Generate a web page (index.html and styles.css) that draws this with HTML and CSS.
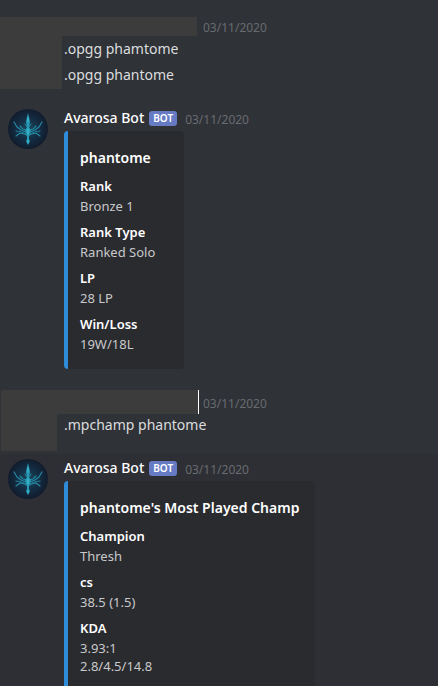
FILE: index.html
```html
<!DOCTYPE html>
<html lang="en">
<head>
<meta charset="utf-8">
<meta name="viewport" content="width=device-width, initial-scale=1">
<title>Chat</title>
<link rel="stylesheet" href="styles.css">
</head>
<body>
<svg class="defs" aria-hidden="true">
  <defs>
    <radialGradient id="glow">
      <stop offset="0" stop-color="#19485c"/>
      <stop offset="0.55" stop-color="#142d43"/>
      <stop offset="1" stop-color="#111c2d"/>
    </radialGradient>
    <symbol id="crest" viewBox="0 0 40 40">
      <circle cx="20" cy="20" r="20" fill="url(#glow)"/>
      <g fill="none" stroke="#2389a3" stroke-linecap="round" stroke-linejoin="round">
        <path d="M6 13l3 5 4 3 5 2M34 13l-3 5-4 3-5 2" stroke-width="1.2"/>
        <path d="M12 17l3 3 4 1M28 17l-3 3-4 1" stroke-width="1.1"/>
        <path d="M8 22l5 1 5 2M32 22l-5 1-5 2" stroke-width="1" stroke-dasharray="2 1"/>
        <path d="M8 27l4-3 5 1 3 2 3-2 5-1 4 3" stroke-width="1.2"/>
        <path d="M17 15l2 3M23 15l-2 3" stroke-width="1"/>
      </g>
      <path d="M20 4l1 4 1 5-1 5 2 4-2 4v4l1 2-2 4-2-4 1-2v-4l-2-4 2-4-1-5 1-5z" fill="#279bb5"/>
      <path d="M20 9v3M20 20v5M20 32v2" fill="none" stroke="#45c6d8" stroke-linecap="round"/>
    </symbol>
  </defs>
</svg>
<main class="chat">
  <article class="post">
    <header class="post-head">
      <span class="mask mask-name"></span>
      <time class="date">03/11/2020</time>
    </header>
    <div class="post-body">
      <span class="mask mask-avatar"></span>
      <div class="lines">
        <p>.opgg phamtome</p>
        <p>.opgg phantome</p>
      </div>
    </div>
  </article>

  <article class="message">
    <svg class="avatar" role="img" aria-label="Avarosa Bot"><use href="#crest"/></svg>
    <div class="content">
      <header class="head">
        <h2 class="name">Avarosa Bot</h2>
        <span class="tag">BOT</span>
        <time class="date">03/11/2020</time>
      </header>
      <section class="embed">
        <h3 class="title">phantome</h3>
        <dl class="fields">
          <div><dt>Rank</dt><dd>Bronze 1</dd></div>
          <div><dt>Rank Type</dt><dd>Ranked Solo</dd></div>
          <div><dt>LP</dt><dd>28 LP</dd></div>
          <div><dt>Win/Loss</dt><dd>19W/18L</dd></div>
        </dl>
      </section>
    </div>
  </article>

  <article class="post post-second">
    <header class="post-head">
      <span class="mask mask-name"></span>
      <time class="date">03/11/2020</time>
    </header>
    <div class="post-body">
      <span class="mask mask-avatar"></span>
      <div class="lines">
        <p>.mpchamp phantome</p>
      </div>
    </div>
  </article>

  <article class="message message-hover">
    <svg class="avatar" role="img" aria-label="Avarosa Bot"><use href="#crest"/></svg>
    <div class="content">
      <header class="head">
        <h2 class="name">Avarosa Bot</h2>
        <span class="tag">BOT</span>
        <time class="date">03/11/2020</time>
      </header>
      <section class="embed">
        <h3 class="title">phantome's Most Played Champ</h3>
        <dl class="fields">
          <div><dt>Champion</dt><dd>Thresh</dd></div>
          <div><dt>cs</dt><dd>38.5 (1.5)</dd></div>
          <div><dt>KDA</dt><dd>3.93:1<br>2.8/4.5/14.8</dd></div>
        </dl>
      </section>
    </div>
  </article>
</main>
</body>
</html>
```
FILE: styles.css
```css
* {
  box-sizing: border-box;
}

body,
h2,
h3,
p,
dl,
dd {
  margin: 0;
}

body {
  background: #2f3237;
  color: #dcddde;
  font-family: "Noto Sans", "Open Sans", sans-serif;
}

.defs {
  position: absolute;
  width: 0;
  height: 0;
}

.chat {
  display: flex;
  flex-direction: column;
  height: 100vh;
  padding-top: 17px;
  overflow: hidden;
}

.chat > * {
  flex: none;
}

.post-head {
  display: flex;
  gap: 6px;
  align-items: center;
}

.post-body {
  display: flex;
}

.mask {
  flex: none;
  background: #3c3c3c;
}

.mask-name {
  width: 197px;
  height: 19px;
}

.mask-avatar {
  width: 62px;
  height: 53px;
}

.lines {
  padding-left: 2px;
  font-size: 14px;
  line-height: 26px;
}

.post-second {
  margin: 21px 0 3px 1px;
}

.post-second .post-head {
  gap: 4px;
}

.post-second .mask-name {
  width: 198px;
  height: 24px;
  border-right: 1px solid #ffffff;
}

.post-second .mask-avatar {
  width: 56px;
  height: 37px;
}

.post-second .lines {
  padding-left: 7px;
  line-height: 22px;
}

.date {
  padding-top: 2px;
  color: #686b71;
  font-size: 12px;
  line-height: 17px;
}

.message {
  display: flex;
  gap: 16px;
  padding: 20px 16px 0 8px;
}

.message-hover {
  padding-top: 5px;
  padding-bottom: 16px;
  background: #2e2f34;
}

.avatar {
  flex: none;
  width: 40px;
  height: 40px;
}

.content {
  flex: 1;
  min-width: 0;
}

.head {
  display: flex;
  align-items: center;
  height: 18px;
  margin-bottom: 4px;
}

.name {
  color: #ffffff;
  font-size: 14px;
  font-weight: 500;
  line-height: 18px;
}

.tag {
  margin: 0 8px 0 5px;
  padding: 0 4px;
  border-radius: 3px;
  background: #677bc4;
  color: #ffffff;
  font-size: 10px;
  font-weight: 600;
  line-height: 15px;
}

.embed {
  width: fit-content;
  min-width: 120px;
  padding: 16px 16px 16px 12px;
  border-left: 4px solid #2f8cd8;
  border-radius: 4px;
  background: #2a2b2f;
}

.title {
  margin-bottom: 8px;
  color: #ffffff;
  font-size: 14px;
  font-weight: 600;
  line-height: 22px;
}

.fields {
  display: grid;
  gap: 8px;
  font-size: 13px;
  line-height: 18px;
}

dt {
  margin-bottom: 2px;
  color: #ffffff;
  font-weight: 600;
}

dd {
  color: #c8c9cb;
}
```
